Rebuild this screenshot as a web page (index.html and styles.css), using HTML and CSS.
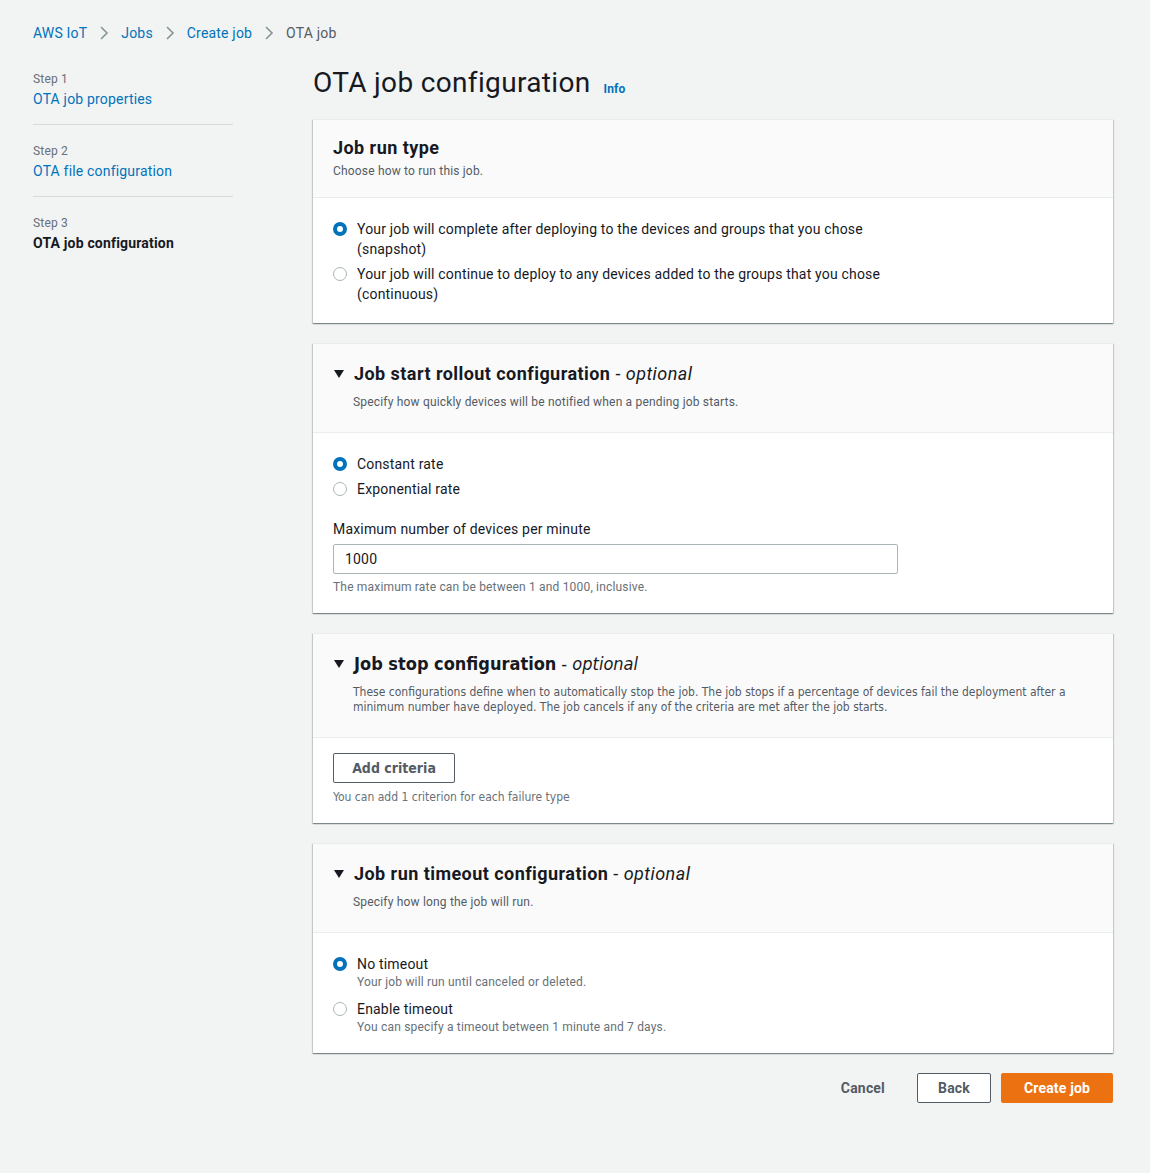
FILE: index.html
```html
<!DOCTYPE html>
<html lang="en">
<head>
    <meta charset="UTF-8">
    <meta name="viewport" content="width=device-width, initial-scale=1.0">
    <title>OTA job configuration</title>
    <link rel="stylesheet" href="styles.css">
</head>
<body>
    <div class="page">
        <nav class="crumbs">
            <a href="#">AWS IoT</a>
            <span class="sep"><svg width="10" height="14" viewBox="0 0 10 14"><path d="M2 1l6 6-6 6" fill="none" stroke="#879596" stroke-width="1.6"/></svg></span>
            <a href="#">Jobs</a>
            <span class="sep"><svg width="10" height="14" viewBox="0 0 10 14"><path d="M2 1l6 6-6 6" fill="none" stroke="#879596" stroke-width="1.6"/></svg></span>
            <a href="#">Create job</a>
            <span class="sep"><svg width="10" height="14" viewBox="0 0 10 14"><path d="M2 1l6 6-6 6" fill="none" stroke="#879596" stroke-width="1.6"/></svg></span>
            <span class="current">OTA job</span>
        </nav>

        <div class="layout">
            <ul class="steps">
                <li class="step">
                    <div class="step-num">Step 1</div>
                    <a href="#" class="step-link">OTA job properties</a>
                </li>
                <li class="step">
                    <div class="step-num">Step 2</div>
                    <a href="#" class="step-link">OTA file configuration</a>
                </li>
                <li class="step last">
                    <div class="step-num">Step 3</div>
                    <div class="step-active">OTA job configuration</div>
                </li>
            </ul>

            <main class="main">
                <div class="title-row">
                    <h1>OTA job configuration</h1>
                    <a href="#" class="info">Info</a>
                </div>

                <section class="panel">
                    <div class="panel-head">
                        <h2>Job run type</h2>
                        <p class="head-desc">Choose how to run this job.</p>
                    </div>
                    <div class="panel-body">
                        <div class="radio-row">
                            <span class="radio checked"></span>
                            <span class="radio-text">Your job will complete after deploying to the devices and groups that you chose<br>(snapshot)</span>
                        </div>
                        <div class="radio-row">
                            <span class="radio"></span>
                            <span class="radio-text">Your job will continue to deploy to any devices added to the groups that you chose<br>(continuous)</span>
                        </div>
                    </div>
                </section>

                <section class="panel">
                    <div class="panel-head expand">
                        <h2><span class="caret"></span>Job start rollout configuration <span class="opt">- <i>optional</i></span></h2>
                        <p class="head-desc indent">Specify how quickly devices will be notified when a pending job starts.</p>
                    </div>
                    <div class="panel-body rollout-body">
                        <div class="radio-row">
                            <span class="radio checked"></span>
                            <span class="radio-text">Constant rate</span>
                        </div>
                        <div class="radio-row">
                            <span class="radio"></span>
                            <span class="radio-text">Exponential rate</span>
                        </div>
                        <label class="field-label" for="rate">Maximum number of devices per minute</label>
                        <input class="text-input" id="rate" type="text" value="1000">
                        <p class="hint">The maximum rate can be between 1 and 1000, inclusive.</p>
                    </div>
                </section>

                <section class="panel narrow">
                    <div class="panel-head expand">
                        <h2><span class="caret"></span>Job stop configuration <span class="opt">- <i>optional</i></span></h2>
                        <p class="head-desc indent">These configurations define when to automatically stop the job. The job stops if a percentage of devices fail the deployment after a minimum number have deployed. The job cancels if any of the criteria are met after the job starts.</p>
                    </div>
                    <div class="panel-body stop-body">
                        <button class="btn-outline criteria">Add criteria</button>
                        <p class="hint">You can add 1 criterion for each failure type</p>
                    </div>
                </section>

                <section class="panel">
                    <div class="panel-head expand">
                        <h2><span class="caret"></span>Job run timeout configuration <span class="opt">- <i>optional</i></span></h2>
                        <p class="head-desc indent">Specify how long the job will run.</p>
                    </div>
                    <div class="panel-body timeout-body">
                        <div class="radio-row">
                            <span class="radio checked"></span>
                            <span class="radio-text">No timeout<small>Your job will run until canceled or deleted.</small></span>
                        </div>
                        <div class="radio-row">
                            <span class="radio"></span>
                            <span class="radio-text">Enable timeout<small>You can specify a timeout between 1 minute and 7 days.</small></span>
                        </div>
                    </div>
                </section>

                <div class="actions">
                    <button class="btn-link">Cancel</button>
                    <button class="btn-outline back">Back</button>
                    <button class="btn-primary">Create job</button>
                </div>
            </main>
        </div>
    </div>
</body>
</html>
```

FILE: styles.css
```css
body {
    margin: 0;
    background: #f2f3f3;
    font-family: Roboto, "Open Sans", sans-serif;
    color: #16191f;
    font-size: 14px;
    line-height: 20px;
    letter-spacing: 0.013em;
}
a {
    color: #0073bb;
    text-decoration: none;
}
.page {
    padding: 23px 37px 70px 33px;
}
.crumbs {
    display: flex;
    align-items: center;
    height: 20px;
}
.crumbs .sep {
    display: inline-flex;
    margin: 0 12px 0 12px;
}
.crumbs .current {
    color: #545b64;
}
.layout {
    display: grid;
    grid-template-columns: 200px 800px;
    column-gap: 80px;
    margin-top: 22px;
}
.steps {
    list-style: none;
    margin: 0;
    padding: 0;
}
.step {
    padding: 17px 0 15px;
    border-bottom: 1px solid #d5dbdb;
}
.step:first-child {
    padding-top: 5px;
}
.step.last {
    border-bottom: none;
}
.step-num {
    font-size: 12px;
    line-height: 18px;
    color: #687078;
    margin-bottom: 1px;
}
.step-active {
    font-weight: bold;
}
.title-row {
    display: flex;
    align-items: baseline;
    margin-bottom: 18px;
}
h1 {
    font-size: 28px;
    line-height: 36px;
    font-weight: normal;
    letter-spacing: 0.012em;
    margin: 0;
}
.info {
    font-size: 12px;
    font-weight: bold;
    margin-left: 13px;
    position: relative;
    top: 1px;
}
.panel {
    background: #fff;
    border-top: 1px solid #eaeded;
    box-shadow: 0 1px 1px 0 rgba(0, 28, 36, 0.3), 1px 1px 1px 0 rgba(0, 28, 36, 0.15), -1px 1px 1px 0 rgba(0, 28, 36, 0.15);
    margin-bottom: 20px;
}
.panel-head {
    background: #fafafa;
    border-bottom: 1px solid #eaeded;
    padding: 17px 20px 18px;
}
.panel-head.expand {
    padding: 19px 20px 22px;
}
h2 {
    font-size: 18px;
    line-height: 22px;
    font-weight: bold;
    margin: 0;
    display: flex;
    align-items: center;
    letter-spacing: 0.025em;
}
.opt {
    font-weight: normal;
    margin-left: 5px;
}
.caret {
    width: 0;
    height: 0;
    border-left: 5px solid transparent;
    border-right: 5px solid transparent;
    border-top: 8px solid #16191f;
    margin: 0 10px 0 1px;
}
.head-desc {
    font-size: 12px;
    line-height: 16px;
    color: #545b64;
    margin: 4px 0 0;
}
.head-desc.indent {
    margin: 10px 0 0 20px;
    line-height: 15px;
}
.panel-body {
    padding: 21px 20px 19px;
}
.radio-row {
    display: flex;
    align-items: flex-start;
    margin-bottom: 5px;
}
.radio-row:last-child {
    margin-bottom: 0;
}
.timeout-body .radio-row {
    margin-bottom: 9px;
}
.timeout-body .radio-row:last-child {
    margin-bottom: 0;
}
.radio {
    flex: none;
    box-sizing: border-box;
    width: 14px;
    height: 14px;
    border-radius: 50%;
    border: 1px solid #aab7b8;
    background: #fff;
    margin: 3px 10px 0 0;
}
.radio.checked {
    border: 4px solid #0073bb;
}
.radio-text small {
    display: block;
    font-size: 12px;
    line-height: 16px;
    color: #687078;
}
.field-label {
    display: block;
    margin-top: 20px;
    line-height: 20px;
}
.text-input {
    display: block;
    box-sizing: border-box;
    width: 565px;
    height: 30px;
    margin-top: 5px;
    border: 1px solid #aab7b8;
    border-radius: 2px;
    padding: 0 11px;
    font-family: inherit;
    font-size: 14px;
    letter-spacing: inherit;
    color: #16191f;
}
.hint {
    font-size: 12px;
    line-height: 16px;
    color: #687078;
    margin: 5px 0 0;
}
.rollout-body {
    padding-bottom: 18px;
}
.timeout-body {
    padding-bottom: 18px;
}
.narrow .head-desc,
.narrow h2,
.narrow .hint,
.narrow .criteria {
    font-family: "Liberation Sans Narrow", "DejaVu Sans", sans-serif;
    font-stretch: condensed;
    letter-spacing: 0;
}
.stop-body {
    padding: 15px 20px 18px;
}
.stop-body .hint {
    margin-top: 6px;
}
.btn-outline {
    font-family: inherit;
    font-size: 14px;
    font-weight: bold;
    letter-spacing: inherit;
    color: #545b64;
    background: #fff;
    border: 1px solid #545b64;
    border-radius: 2px;
    height: 30px;
    padding: 0 20px;
    cursor: pointer;
}
.criteria {
    width: 122px;
    padding: 0;
}
.actions {
    display: flex;
    justify-content: flex-end;
    align-items: center;
}
.btn-link {
    font-family: inherit;
    font-size: 14px;
    font-weight: bold;
    letter-spacing: inherit;
    color: #545b64;
    background: none;
    border: none;
    padding: 0 20px;
    margin-right: 12px;
    height: 30px;
    cursor: pointer;
}
.back {
    width: 74px;
    padding: 0;
    margin-right: 10px;
}
.btn-primary {
    font-family: inherit;
    font-size: 14px;
    font-weight: bold;
    letter-spacing: inherit;
    color: #fff;
    background: #ec7211;
    border: 1px solid #ec7211;
    border-radius: 2px;
    height: 30px;
    width: 112px;
    cursor: pointer;
}
```
